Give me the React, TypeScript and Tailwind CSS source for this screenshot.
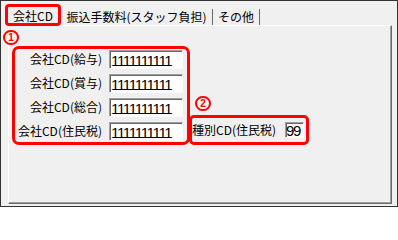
import React from "react";

const labels = ["会社CD(給与)", "会社CD(賞与)", "会社CD(総合)", "会社CD(住民税)"];

function TextBox({ value, width }: { value: string; width: "wide" | "narrow" }) {
    return (
        <div
            className={
                width === "wide"
                    ? "h-[19px] w-[74px] overflow-hidden whitespace-nowrap border border-[#a0a0a0] border-r-white border-b-white bg-white pl-px pt-[2px] font-['Liberation_Sans',Arial,sans-serif] text-[15px] leading-[15px] tracking-[-1.3px] text-black shadow-[inset_1px_1px_0_#696969]"
                    : "h-[16px] w-[19px] overflow-hidden whitespace-nowrap border border-[#a0a0a0] border-r-white border-b-white bg-white pt-px font-['Liberation_Sans',Arial,sans-serif] text-[15px] leading-[14px] tracking-[-1.3px] text-black shadow-[inset_1px_1px_0_#696969]"
            }
        >
            {value}
        </div>
    );
}

function Mark({ n }: { n: string }) {
    return (
        <div className="flex h-[15px] w-[16px] items-center justify-center rounded-full border-2 border-[#ff0000] font-['Liberation_Sans',Arial,sans-serif] text-[10px] font-bold leading-none text-[#ff0000]">
            {n}
        </div>
    );
}

export default function App() {
    return (
        <div className="flex h-[207px] w-[398px] flex-col border border-[#333333] bg-[#f0f0f0] pb-[2px] pl-[7px] pr-[5px] font-['Noto_Sans_CJK_JP','Noto_Sans_CJK_SC',sans-serif] text-[12px] text-black">
            {/* Tabs */}
            <div className="-ml-[3px] flex h-[24px] items-end">
                <div className="relative z-10 -mb-px flex h-[22px] w-[56px] items-center justify-center rounded-[4px] border-[3px] border-[#ff0000] bg-[#f0f0f0] pt-[2px] leading-[16px]">
                    会社CD
                </div>
                <div className="flex h-[16px] w-[152px] items-center justify-center border-r border-[#696969] leading-[16px]">
                    振込手数料(スタッフ負担)
                </div>
                <div className="flex h-[16px] w-[47px] items-center justify-center border-r border-[#696969] leading-[16px]">
                    その他
                </div>
            </div>

            {/* Panel */}
            <div className="relative flex-1 border-t border-l border-white border-r border-b border-r-[#696969] border-b-[#696969] pl-[3px] pt-[20px] shadow-[inset_-1px_-1px_0_#a0a0a0]">
                <div className="absolute -left-[6px] top-[4px]">
                    <Mark n="1" />
                </div>

                <div className="flex items-end">
                    {/* 会社CD group */}
                    <div className="flex h-[99px] w-[178px] flex-col gap-[5px] rounded-[7px] border-[3px] border-[#ff0000] pr-[4px] pt-px">
                        {labels.map((label) => (
                            <div key={label} className="flex h-[19px] items-center justify-end gap-[7px]">
                                <span className="pb-[2px] leading-[16px]">{label}</span>
                                <TextBox value="1111111111" width="wide" />
                            </div>
                        ))}
                    </div>

                    {/* 種別CD group */}
                    <div className="-ml-px flex flex-col">
                        <div className="mb-[4px] ml-[6px]">
                            <Mark n="2" />
                        </div>
                        <div className="flex h-[30px] w-[120px] items-center justify-between rounded-[5px] border-[3px] border-[#ff0000] pr-[2px]">
                            <span className="leading-[16px]">種別CD(住民税)</span>
                            <TextBox value="99" width="narrow" />
                        </div>
                    </div>
                </div>
            </div>
        </div>
    );
}
